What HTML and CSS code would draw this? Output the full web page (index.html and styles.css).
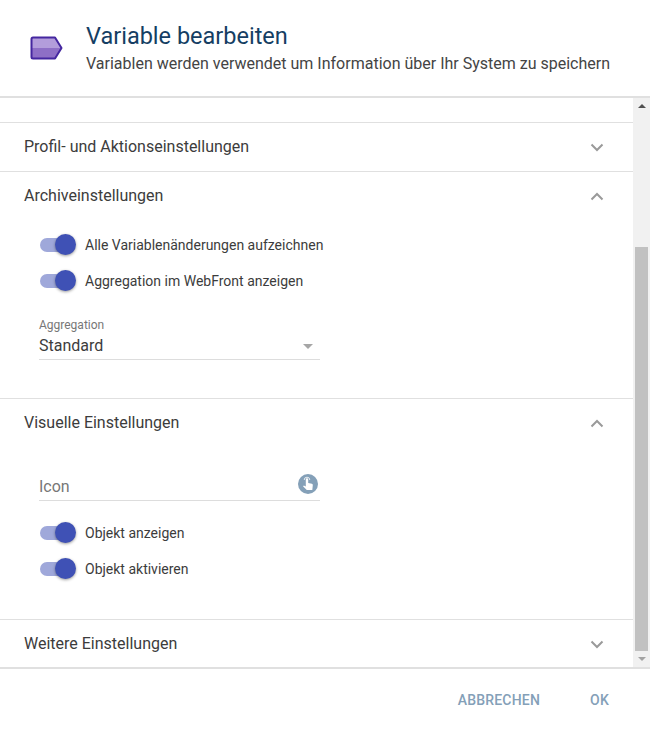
FILE: index.html
```html
<!DOCTYPE html>
<html lang="de">
<head>
    <meta charset="UTF-8">
    <title>Variable bearbeiten</title>
    <link rel="stylesheet" href="styles.css">
</head>
<body>
    <div class="dialog">
        <header class="head">
            <svg class="var-icon" width="34" height="26" viewBox="0 0 34 26">
                <path d="M3 2.500H25L31.500 13L25 23.500H3Q1.500 23.500 1.500 22V4Q1.500 2.500 3 2.500Z" fill="#8e6fc6"/>
                <path d="M3 3H25L31 13H2V4Q2 3 3 3Z" fill="#b39ddb"/>
                <path d="M3 2.500H25L31.500 13L25 23.500H3Q1.500 23.500 1.500 22V4Q1.500 2.500 3 2.500Z" fill="none" stroke="#4527a0" stroke-width="2" stroke-linejoin="round"/>
            </svg>
            <div>
                <h1>Variable bearbeiten</h1>
                <p>Variablen werden verwendet um Information über Ihr System zu speichern</p>
            </div>
        </header>

        <div class="middle">
            <div class="scroll">
                <section class="panel">
                    <div class="panel-title">
                        <span>Profil- und Aktionseinstellungen</span>
                        <svg class="chev" width="14" height="9" viewBox="0 0 14 9"><path d="M1.500 1.500L7 7L12.500 1.500" fill="none" stroke="#9a9a9a" stroke-width="2"/></svg>
                    </div>
                </section>

                <section class="panel">
                    <div class="panel-title">
                        <span>Archiveinstellungen</span>
                        <svg class="chev" width="14" height="9" viewBox="0 0 14 9"><path d="M1.500 7.500L7 2L12.500 7.500" fill="none" stroke="#9a9a9a" stroke-width="2"/></svg>
                    </div>
                    <div class="panel-body archive">
                        <div class="switch-row"><span class="switch"><i></i></span>Alle Variablenänderungen aufzeichnen</div>
                        <div class="switch-row"><span class="switch"><i></i></span>Aggregation im WebFront anzeigen</div>
                        <div class="field select-field">
                            <label>Aggregation</label>
                            <div class="value">Standard<b class="caret"></b></div>
                        </div>
                    </div>
                </section>

                <section class="panel">
                    <div class="panel-title">
                        <span>Visuelle Einstellungen</span>
                        <svg class="chev" width="14" height="9" viewBox="0 0 14 9"><path d="M1.500 7.500L7 2L12.500 7.500" fill="none" stroke="#9a9a9a" stroke-width="2"/></svg>
                    </div>
                    <div class="panel-body visual">
                        <div class="field icon-field">
                            <div class="value placeholder">Icon
                                <svg class="pick" width="20" height="20" viewBox="0 0 20 20">
                                    <circle cx="10" cy="10" r="10" fill="#84a0b8"/>
                                    <path d="M7.800 5.500a1.200 1.200 0 0 1 2.400 0V9l3.700.8c.7.2 1 .7.900 1.400L14.300 16H8.800L5 12.300l.9-.9 1.900 1Z" fill="#fff"/>
                                    <path d="M6.200 6a2.800 2.800 0 0 1 5.600 0" fill="none" stroke="#fff" stroke-width=".8"/>
                                </svg>
                            </div>
                        </div>
                        <div class="switch-row"><span class="switch"><i></i></span>Objekt anzeigen</div>
                        <div class="switch-row"><span class="switch"><i></i></span>Objekt aktivieren</div>
                    </div>
                </section>

                <section class="panel">
                    <div class="panel-title">
                        <span>Weitere Einstellungen</span>
                        <svg class="chev" width="14" height="9" viewBox="0 0 14 9"><path d="M1.500 1.500L7 7L12.500 1.500" fill="none" stroke="#9a9a9a" stroke-width="2"/></svg>
                    </div>
                </section>
            </div>

            <div class="scrollbar">
                <b class="arrow up"></b>
                <div class="track"><div class="thumb"></div></div>
                <b class="arrow down"></b>
            </div>
        </div>

        <footer class="foot">
            <button>Abbrechen</button>
            <button>OK</button>
        </footer>
    </div>
</body>
</html>
```

FILE: styles.css
```css
body {
    margin: 0;
    font-family: Roboto, sans-serif;
    background-color: #fff;
    color: #3c3c3c;
    overflow: hidden;
}

.dialog {
    width: 650px;
    height: 733px;
    display: flex;
    flex-direction: column;
}

.head {
    box-sizing: border-box;
    border-bottom: 2px solid #e0e0e0;
    height: 98px;
    display: flex;
    align-items: flex-start;
    padding: 22px 0 0 30px;
}

.var-icon {
    margin: 13px 22px 0 0;
    flex: none;
}

h1 {
    margin: 0;
    font-size: 23.5px;
    font-weight: 400;
    line-height: 28px;
    color: #153e63;
}

.head p {
    margin: 4px 0 0;
    font-size: 16px;
    line-height: 20px;
    color: #444;
}

.middle {
    height: 569px;
    display: flex;
}

.scroll {
    flex: 1;
    padding-top: 24px;
    overflow: hidden;
}

.panel {
    border-top: 1px solid #e0e0e0;
}

.panel-title {
    height: 48px;
    box-sizing: border-box;
    padding: 0 29px 2px 24px;
    display: flex;
    align-items: center;
    justify-content: space-between;
    font-size: 16px;
    color: #3c3c3c;
}

.chev {
    margin-top: 2px;
}

.panel-body {
    padding: 0 0 0 39px;
    box-sizing: border-box;
}

.archive {
    height: 178px;
    padding-top: 7px;
}

.visual {
    height: 172px;
    padding-top: 29px;
}

.switch-row {
    height: 36px;
    display: flex;
    align-items: center;
    font-size: 14px;
    color: #3c3c3c;
}

.switch {
    position: relative;
    width: 35px;
    height: 14px;
    margin: 0 10px 0 1px;
    border-radius: 7px;
    background-color: #9fa8da;
}

.switch i {
    position: absolute;
    left: 15px;
    top: -4px;
    width: 21px;
    height: 21px;
    border-radius: 50%;
    background-color: #3f51b5;
    box-shadow: 0 1px 3px rgba(0, 0, 0, 0.4);
}

.field {
    width: 281px;
    border-bottom: 1px solid #ddd;
}

.field label {
    display: block;
    font-size: 12px;
    line-height: 14px;
    color: #777;
}

.value {
    display: flex;
    align-items: center;
    justify-content: space-between;
    font-size: 16px;
    line-height: 20px;
    color: #3c3c3c;
}

.select-field {
    margin-top: 19px;
    padding-bottom: 3px;
}

.select-field .value {
    margin-top: 4px;
}

.caret {
    width: 0;
    height: 0;
    margin-right: 7px;
    border-left: 5px solid transparent;
    border-right: 5px solid transparent;
    border-top: 5px solid #a6a6a6;
}

.icon-field {
    margin-bottom: 14px;
    padding-bottom: 2px;
}

.placeholder {
    height: 22px;
    color: #777;
    padding-right: 2px;
}

.pick {
    margin-top: -7px;
}

.scrollbar {
    width: 17px;
    background-color: #f1f1f1;
    display: flex;
    flex-direction: column;
    align-items: center;
}

.arrow {
    flex: none;
    width: 0;
    height: 0;
    border-left: 4px solid transparent;
    border-right: 4px solid transparent;
}

.arrow.up {
    margin: 6px 0 5px;
    border-bottom: 4px solid #505050;
}

.arrow.down {
    margin: 5px 0 6px;
    border-top: 4px solid #a3a3a3;
}

.track {
    flex: 1;
    width: 100%;
    padding-top: 134px;
    box-sizing: border-box;
    display: flex;
    justify-content: center;
}

.thumb {
    width: 13px;
    height: 404px;
    background-color: #c1c1c1;
}

.foot {
    flex: 1;
    border-top: 2px solid #e0e0e0;
    display: flex;
    justify-content: flex-end;
    align-items: flex-start;
    padding: 20px 41px 0 0;
    gap: 50px;
}

button {
    border: none;
    background: none;
    padding: 0;
    font-family: inherit;
    font-size: 14px;
    font-weight: 500;
    line-height: 22px;
    letter-spacing: 0.2px;
    text-transform: uppercase;
    color: #84a0b8;
}
```
